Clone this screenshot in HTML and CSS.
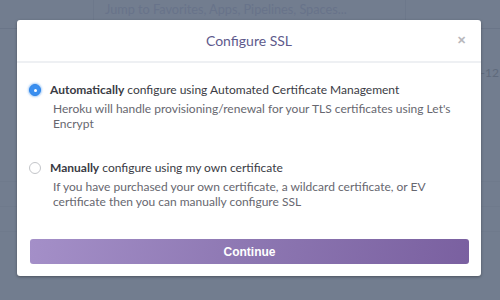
FILE: index.html
```html
<!DOCTYPE html>
<html>
<head>
<meta charset="utf-8">
<link rel="stylesheet" href="styles.css">
</head>
<body>
<div class="page">
  <div class="topbar">
    <div class="side"></div>
    <div class="search">Jump to Favorites, Apps, Pipelines, Spaces...</div>
    <div class="side"></div>
  </div>
  <div class="content">
    <div class="row first"><span class="appname">d-12</span></div>
    <div class="row tall"></div>
    <div class="row"></div>
  </div>
</div>
<div class="modal">
  <div class="modal-header">
    <div class="title">Configure SSL</div>
    <div class="close">&#x2715;</div>
  </div>
  <div class="modal-body">
    <div class="option">
      <span class="radio checked"></span>
      <div class="option-text">
        <div class="label"><b>Automatically</b> configure using Automated Certificate Management</div>
        <div class="desc">Heroku will handle provisioning/renewal for your TLS certificates using Let's Encrypt</div>
      </div>
    </div>
    <div class="option">
      <span class="radio"></span>
      <div class="option-text">
        <div class="label"><b>Manually</b> configure using my own certificate</div>
        <div class="desc">If you have purchased your own certificate, a wildcard certificate, or EV certificate then you can manually configure SSL</div>
      </div>
    </div>
    <button class="continue">Continue</button>
  </div>
</div>
</body>
</html>
```
FILE: styles.css
```css
html, body {
  margin: 0;
  padding: 0;
}
body {
  width: 500px;
  height: 300px;
  overflow: hidden;
  background: #727d8f;
  font-family: "Lato", "Open Sans", sans-serif;
  position: relative;
}
.page {
  display: flex;
  flex-direction: column;
  height: 100%;
}
.topbar {
  height: 28px;
  display: flex;
  border-bottom: 1px solid #6a7588;
}
.side {
  width: 93px;
}
.side:last-child {
  flex: 1;
}
.search {
  width: 300px;
  border-left: 1px solid #6d788b;
  border-right: 1px solid #6d788b;
  padding: 1px 0 0 11px;
  font-size: 12.7px;
  color: #68738a;
}
.content {
  flex: 1;
  display: flex;
  flex-direction: column;
}
.row {
  height: 24px;
  border-bottom: 1px solid #6f7a8c;
  display: flex;
  justify-content: flex-end;
}
.row.first {
  height: 153px;
  align-items: flex-start;
  padding-top: 36px;
  box-sizing: border-box;
}
.row.tall {
  height: 24px;
}
.appname {
  font-size: 12px;
  color: #5f6a7c;
  padding-right: 1px;
}
.modal {
  position: absolute;
  left: 17px;
  top: 20px;
  width: 464px;
  height: 256px;
  background: #fff;
  border-radius: 3px;
  box-shadow: 0 1px 3px rgba(0,0,0,0.35);
  display: flex;
  flex-direction: column;
}
.modal-header {
  height: 41px;
  border-bottom: 2px solid #eef0f3;
  display: flex;
  align-items: center;
  justify-content: center;
  position: relative;
}
.title {
  font-size: 14px;
  color: #5e5a8c;
}
.close {
  position: absolute;
  right: 15px;
  top: 13px;
  font-size: 11px;
  color: #b8b8bc;
  font-weight: bold;
}
.modal-body {
  flex: 1;
  display: flex;
  flex-direction: column;
  padding: 19px 12px 12px 12px;
}
.option {
  display: flex;
  align-items: flex-start;
  gap: 9px;
  margin-bottom: 29px;
}
.radio {
  flex: none;
  width: 10px;
  height: 10px;
  margin-top: 2px;
  border: 1px solid #c3c5c9;
  border-radius: 50%;
  background: #fff;
  position: relative;
}
.radio.checked {
  border-color: #2f86e8;
  background: #3a8ff0;
  box-shadow: 0 0 2px 1px rgba(58,143,240,0.45);
}
.radio.checked::after {
  content: "";
  position: absolute;
  left: 3.5px;
  top: 3.5px;
  width: 3px;
  height: 3px;
  border-radius: 50%;
  background: #fff;
}
.option-text {
  display: flex;
  flex-direction: column;
}
.label {
  font-size: 12px;
  color: #3a3b44;
  line-height: 16px;
}
.label b {
  font-weight: bold;
}
.desc {
  margin-top: 3px;
  font-size: 12px;
  line-height: 15px;
  color: #67676f;
  padding-left: 3px;
  max-width: 400px;
}
.continue {
  margin-top: auto;
  margin-left: 1px;
  height: 25px;
  width: 439px;
  border: none;
  border-radius: 3px;
  background: linear-gradient(100deg, #a48fc8 0%, #8d77b2 50%, #7a60a0 100%);
  color: #fff;
  font-family: "Liberation Sans", Arial, sans-serif;
  font-weight: bold;
  font-size: 12px;
}
```
